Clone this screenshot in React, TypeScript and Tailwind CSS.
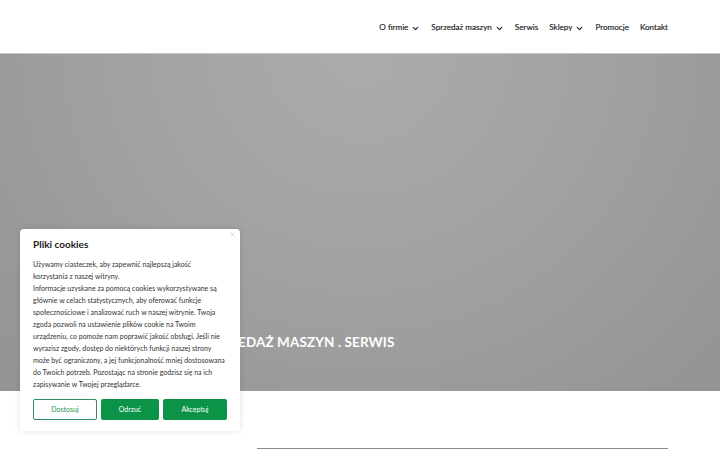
import { ChevronDown, X } from "lucide-react";

const nav = [
  { label: "O firmie", sub: true },
  { label: "Sprzedaż maszyn", sub: true },
  { label: "Serwis", sub: false },
  { label: "Sklepy", sub: true },
  { label: "Promocje", sub: false },
  { label: "Kontakt", sub: false },
];

function CookieBox() {
  return (
    <div className="absolute left-[20px] top-[229px] w-[220px] rounded-[4px] bg-white px-[13px] pt-[8px] pb-[11px] shadow-[0_0_6px_rgba(0,0,0,0.12)]">
      <button className="absolute right-[4px] top-[2px] text-gray-400">
        <X size={7} strokeWidth={1.5} />
      </button>
      <h2 className="text-[10px] font-bold leading-[14px] text-[#222]">Pliki cookies</h2>
      <p className="mt-[7px] text-[7px] leading-[12px] text-[#333]">
        Używamy ciasteczek, aby zapewnić najlepszą jakość korzystania z naszej witryny.
        <br />
        Informacje uzyskane za pomocą cookies wykorzystywane są głównie w celach statystycznych, aby
        oferować funkcje społecznościowe i analizować ruch w naszej witrynie. Twoja zgoda pozwoli na
        ustawienie plików cookie na Twoim urządzeniu, co pomoże nam poprawić jakość obsługi. Jeśli nie
        wyrazisz zgody, dostęp do niektórych funkcji naszej strony może być ograniczony, a jej
        funkcjonalność mniej dostosowana do Twoich potrzeb. Pozostając na stronie godzisz się na ich
        zapisywanie w Twojej przeglądarce.
      </p>
      <div className="mt-[9px] flex gap-[4px]">
        <button className="h-[21px] w-[64px] rounded-[2px] border border-[#2f8f5f] bg-white text-[7px] text-[#1a9656]">
          Dostosuj
        </button>
        <button className="h-[21px] flex-1 rounded-[2px] bg-[#0b9447] text-[7px] text-white">Odrzuć</button>
        <button className="h-[21px] w-[64px] rounded-[2px] bg-[#0b9447] text-[7px] text-white">Akceptuj</button>
      </div>
    </div>
  );
}

export default function App() {
  return (
    <div className="relative h-[450px] w-[720px] overflow-hidden bg-white font-['Lato','Liberation_Sans',sans-serif]">
      <header className="flex h-[53px] items-center justify-end pr-[52px] pt-[2px]">
        <nav className="flex items-center gap-[11px] text-[8.1px] font-normal text-[#1a1a1a]">
          {nav.map((item) => (
            <a key={item.label} className="flex items-center gap-[3px] [-webkit-text-stroke:0.15px_#1a1a1a]">
              {item.label}
              {item.sub && <ChevronDown size={9} strokeWidth={3} className="mt-[2px]" />}
            </a>
          ))}
        </nav>
      </header>

      <section className="relative h-[338px] border-t border-[#c8c8c8] bg-[radial-gradient(ellipse_at_50%_0%,#ababab_0%,#a2a2a2_45%,#939393_100%)]">
        <div className="absolute left-[205px] top-[278px] text-[13.5px] font-bold tracking-[0.1px] text-white">
          SPRZEDAŻ MASZYN . SERWIS
        </div>
      </section>

      <div className="mx-[52px] mt-[57px] flex justify-end">
        <div className="h-px w-[411px] bg-[#8a8a8a]" />
      </div>

      <CookieBox />
    </div>
  );
}
